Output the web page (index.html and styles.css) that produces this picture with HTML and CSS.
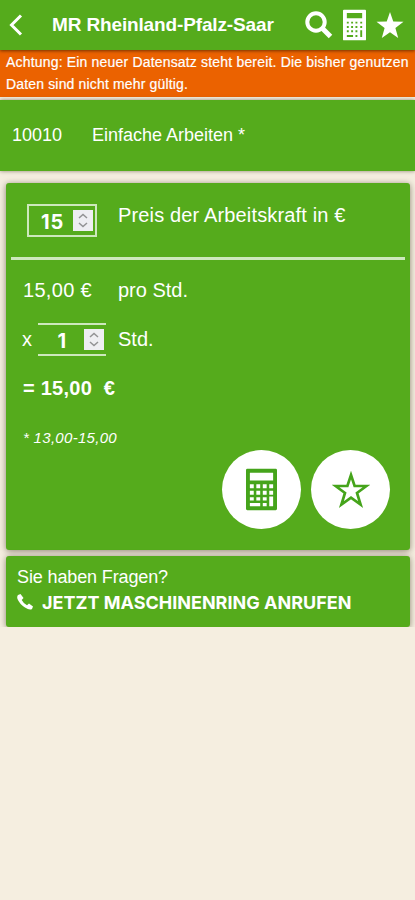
FILE: index.html
```html
<!DOCTYPE html>
<html lang="de">
<head>
    <meta charset="UTF-8">
    <meta name="viewport" content="width=device-width, initial-scale=1.0">
    <title>MR Rheinland-Pfalz-Saar</title>
    <link rel="stylesheet" href="styles.css">
</head>
<body>
    <svg class="symbols" width="0" height="0">
        <symbol id="calculator" viewBox="0 0 24 32">
            <path fill-rule="evenodd" d="M1 0H23Q24 0 24 1V31Q24 32 23 32H1Q0 32 0 31V1Q0 0 1 0ZM3 3V9H21V3ZM3 12v3h3v-3ZM8 12v3h3v-3ZM13 12v3h3v-3ZM18 12v3h3v-3ZM3 17v3h3v-3ZM8 17v3h3v-3ZM13 17v3h3v-3ZM18 17v3h3v-3ZM3 22v2.5h3V22ZM8 22v2.5h3V22ZM13 22v2.5h3V22ZM18 21.500v7.500h3v-7.500ZM3 26.500v2.500h8v-2.500ZM13 26.500v2.500h3v-2.500Z"/>
        </symbol>
        <symbol id="spinner" viewBox="0 0 20 20">
            <path d="M6 7.500L10 4L14 7.500M6 12.500L10 16L14 12.500"/>
        </symbol>
    </svg>

    <header>
        <svg class="back" viewBox="0 0 14 22"><path d="M12 1.500L2.500 11L12 20.500"/></svg>
        <h1>MR Rheinland-Pfalz-Saar</h1>
        <svg class="search" viewBox="0 0 28 28"><circle cx="11" cy="11" r="8.700"/><path d="M17 17L25.500 25.500"/></svg>
        <svg class="calc-top" viewBox="0 0 24 32">
            <path fill-rule="evenodd" d="M1 0H23Q24 0 24 1V31Q24 32 23 32H1Q0 32 0 31V1Q0 0 1 0ZM4 3.500V9H20V3.500ZM4 12.500v2h2v-2ZM8.500 12.500v2h2v-2ZM13 12.500v2h2v-2ZM18 12.500v2h2v-2ZM4 17v2h2v-2ZM8.500 17v2h2v-2ZM13 17v2h2v-2ZM18 17v2h2v-2ZM4 21.500v2h2v-2ZM8.500 21.500v2h2v-2ZM13 21.500v2h2v-2ZM18 21.500v7h2v-7ZM4 26.500v2h6.500v-2ZM13 26.500v2h2v-2Z"/>
        </svg>
        <svg class="star-top" viewBox="0 0 28 28"><path d="M14 0L17.400 9.800L28 10.200L19.600 16.600L22.500 27L14 21L5.500 27L8.400 16.600L0 10.200L10.600 9.800Z"/></svg>
    </header>

    <div class="notice">
        <span class="notice-first">Achtung: Ein neuer Datensatz steht bereit. Die bisher genutzen</span><br>
        <span class="notice-second">Daten sind nicht mehr gültig.</span>
    </div>

    <div class="title">
        <span class="number">10010</span>
        <span class="name">Einfache Arbeiten *</span>
    </div>

    <main class="card">
        <div class="row price">
            <div class="field boxed">
                <span>15</span>
                <svg class="spinner"><use href="#spinner"/></svg>
            </div>
            <span class="price-label">Preis der Arbeitskraft in €</span>
        </div>
        <div class="row unit">
            <span class="amount">15,00 €</span>
            <span>pro Std.</span>
        </div>
        <div class="row count">
            <span class="times">x</span>
            <div class="field lined">
                <span>1</span>
                <svg class="spinner"><use href="#spinner"/></svg>
            </div>
            <span>Std.</span>
        </div>
        <div class="total">= 15,00&nbsp; €</div>
        <div class="range">* 13,00-15,00</div>
        <div class="actions">
            <div class="round"><svg class="calc"><use href="#calculator"/></svg></div>
            <div class="round"><svg class="star" viewBox="0 0 38 38"><path d="M19 4L22.600 14.900L34.500 15L25 22L28.600 33.500L19 26.700L9.400 33.500L13 22L3.500 15L15.400 14.900Z"/></svg></div>
        </div>
    </main>

    <section class="card contact">
        <div class="question">Sie haben Fragen?</div>
        <div class="call">
            <svg class="phone" viewBox="0 0 16 16"><path d="M1 1L3.500 0L6.500 4L4.700 6Q6.500 9.500 10 11.300L12 9.500L16 12.500L15 15Q12.500 16.500 8 13.500Q2.500 10 .5 5Q-.3 2.500 1 1Z"/></svg>
            <span>JETZT MASCHINENRING ANRUFEN</span>
        </div>
    </section>
</body>
</html>
```
FILE: styles.css
```css
* {
    box-sizing: border-box;
}

body {
    margin: 0;
    background: #f5eee0;
    color: #fff;
    font-family: "Liberation Sans", Arial, sans-serif;
    font-size: 20px;
    line-height: 24px;
}

svg {
    display: block;
    flex: none;
    fill: #fff;
}

.symbols {
    position: absolute;
}

header {
    display: flex;
    align-items: center;
    height: 50px;
    padding-left: 9px;
    background: #55ab1c;
    box-shadow: 0 1px 3px rgba(0, 0, 0, 0.5);
    position: relative;
}

.back {
    width: 14px;
    height: 22px;
    fill: none;
    stroke: #fff;
    stroke-width: 3;
}

h1 {
    width: 282px;
    margin: 0;
    padding: 0 0 1px 29px;
    font-size: 19px;
    letter-spacing: -0.14px;
    white-space: nowrap;
}

.search {
    width: 28px;
    height: 28px;
    fill: none;
    stroke: #fff;
    stroke-width: 4;
}

.search path {
    stroke-width: 5;
}

.calc-top {
    width: 23px;
    height: 32px;
    margin-left: 10px;
}

.star-top {
    width: 28px;
    height: 27px;
    margin-left: 10px;
}

.notice {
    height: 47px;
    padding: 1px 0 0 6px;
    background: #eb6200;
    font-size: 14px;
    letter-spacing: 0.18px;
    line-height: 22px;
    white-space: nowrap;
    -webkit-text-stroke: 0.2px #fff;
}

.notice-second {
    letter-spacing: 0.16px;
}

.title {
    display: flex;
    align-items: center;
    height: 71px;
    margin-top: 3px;
    padding: 0 0 2px 12px;
    background: #55ab1c;
    box-shadow: 0 0 4px rgba(70, 60, 40, 0.6);
    font-size: 18px;
}

.number {
    width: 80px;
}

.card {
    height: 367px;
    margin: 12px 5px 0 6px;
    padding: 0 5px;
    background: #55ab1c;
    border-radius: 3px;
    box-shadow: 0 1px 6px rgba(70, 60, 40, 0.6);
}

.row {
    display: flex;
}

.price {
    height: 77px;
    padding: 21px 0 0 16px;
    border-bottom: 3px solid #cde8bd;
}

.field {
    display: flex;
    align-items: center;
    justify-content: flex-end;
    width: 70px;
    height: 33px;
    font-family: Inter, sans-serif;
    font-size: 20px;
    font-weight: bold;
}

.field span {
    padding-top: 2px;
}

.boxed {
    padding-right: 2px;
    border: 2px solid #cde8bd;
}

.boxed span {
    letter-spacing: 0.8px;
}

.spinner {
    width: 20px;
    height: 21px;
    margin-left: 9px;
    background: #eeeef2;
    fill: none;
    stroke: #929294;
    stroke-width: 1.5;
}

.price-label {
    margin: -1px 0 0 21px;
    letter-spacing: 0.15px;
}

.unit {
    padding: 18px 0 0 12px;
}

.amount {
    width: 95px;
    letter-spacing: 0.3px;
}

.count {
    margin-top: 21px;
    padding-left: 11px;
}

.times {
    width: 16px;
    margin-top: 4px;
}

.lined {
    width: 68px;
    padding-right: 2px;
    border: solid #cde8bd;
    border-width: 2px 0;
}

.lined .spinner {
    margin-left: 18px;
}

.count > span:last-child {
    margin: 4px 0 0 12px;
}

.total {
    margin: 20px 0 0 12px;
    font-weight: bold;
    letter-spacing: 0.25px;
}

.range {
    margin: 26px 0 0 12px;
    font-size: 15px;
    font-style: italic;
    letter-spacing: 0.3px;
}

.actions {
    display: flex;
    justify-content: flex-end;
    gap: 10px;
    margin-right: 15px;
}

.round {
    display: flex;
    align-items: center;
    justify-content: center;
    width: 79px;
    height: 79px;
    background: #fff;
    border-radius: 50%;
}

.calc {
    width: 31px;
    height: 43px;
    fill: #45a41b;
}

.star {
    width: 38px;
    height: 38px;
    fill: none;
    stroke: #45a41b;
    stroke-width: 2.7;
}

.contact {
    height: 71px;
    margin-top: 6px;
    padding: 9px 11px;
    font-size: 18px;
}

.question {
    letter-spacing: -0.13px;
}

.call {
    display: flex;
    align-items: center;
    height: 28px;
    font-family: Inter, sans-serif;
    font-weight: bold;
    white-space: nowrap;
}

.phone {
    width: 16px;
    height: 16px;
    margin: -3px 9px 0 0;
}
```
